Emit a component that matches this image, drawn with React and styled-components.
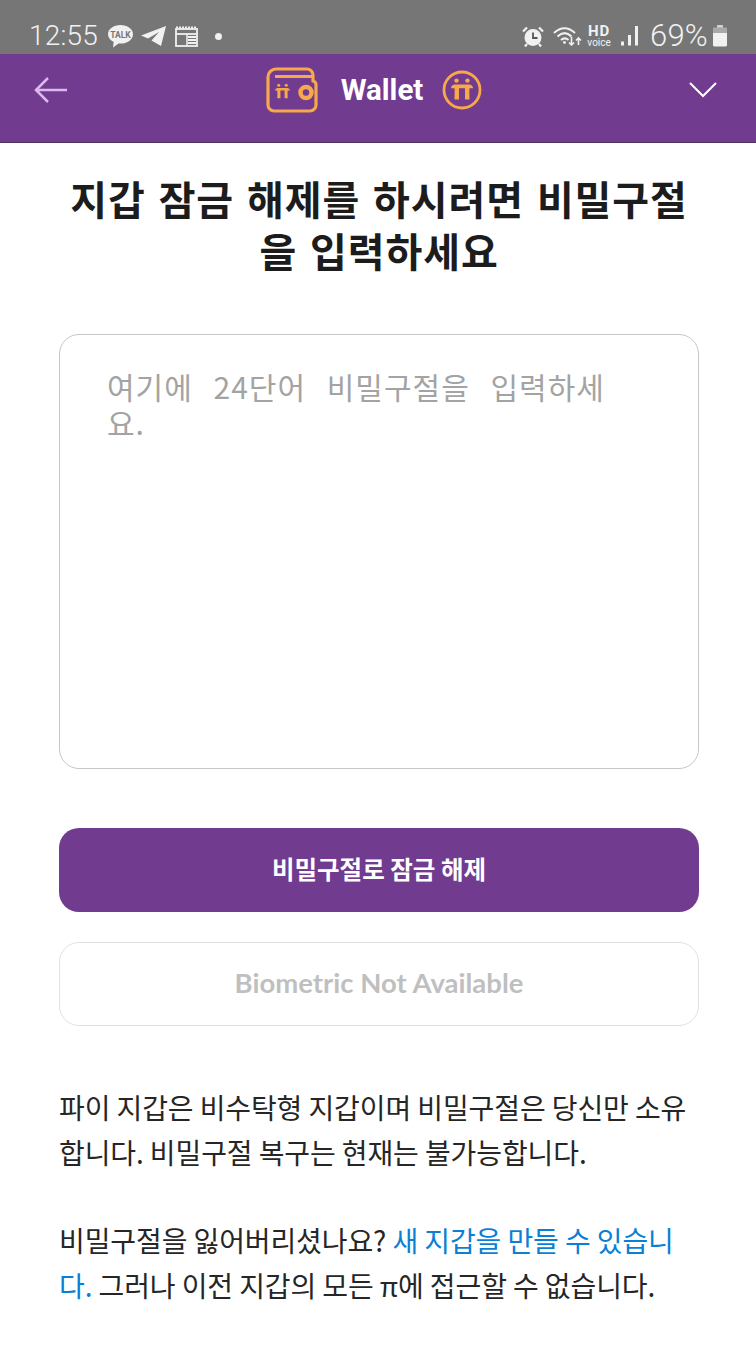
import React from 'react';
import styled, { createGlobalStyle } from 'styled-components';

const purple = '#713b8f';
const orange = '#f6a84a';
const light = '#f1f1f1';
const cjk = '"Noto Sans CJK KR", "Noto Sans", sans-serif';

const GlobalStyle = createGlobalStyle`
  html, body {
    margin: 0;
    padding: 0;
    background: #fff;
  }
  * {
    box-sizing: border-box;
  }
`;

const Page = styled.div`
  width: 756px;
  height: 1358px;
  overflow: hidden;
  background: #fff;
  font-family: ${cjk};
`;

const StatusBar = styled.div`
  height: 54px;
  background: #767676;
  padding: 18px 28px 0 29px;
  display: flex;
  align-items: center;
  justify-content: space-between;
  color: ${light};
`;

const StatusGroup = styled.div`
  display: flex;
  align-items: center;
`;

const StatusItem = styled.div`
  display: flex;
  margin-left: ${({ $left }) => $left || 0}px;
`;

const StatusText = styled.span`
  font-family: Roboto, sans-serif;
  font-size: ${({ $size }) => $size}px;
  font-weight: 300;
  line-height: 32px;
  letter-spacing: 0.2px;
`;

const Header = styled.header`
  height: 89px;
  background: ${purple};
  border-bottom: 1px solid #4c3560;
  padding: 0 39px 16px 34px;
  display: flex;
  align-items: center;
  justify-content: space-between;
`;

const HeaderCenter = styled.div`
  display: flex;
  align-items: center;
  margin-right: 9px;
`;

const HeaderTitle = styled.span`
  margin: 0 19px 0 23px;
  font-family: Roboto, sans-serif;
  font-size: 29.5px;
  font-weight: 700;
  color: #fff;
`;

const Content = styled.main`
  padding: 29px 57px 0 59px;
`;

const Title = styled.h1`
  margin: 0 -4px;
  font-size: 40px;
  font-weight: 700;
  line-height: 52px;
  letter-spacing: 0.9px;
  word-spacing: 3px;
  text-align: center;
  word-break: break-all;
  color: #1c1c1c;
`;

const PhraseBox = styled.div`
  margin-top: 58px;
  height: 435px;
  border: 1px solid #c6c6c6;
  border-radius: 20px;
  padding: 33px 81px 33px 47px;
  font-size: 30px;
  line-height: 36px;
  letter-spacing: 1px;
  word-spacing: 13px;
  word-break: break-all;
  color: #a3a3a3;
`;

const Button = styled.div`
  height: 84px;
  padding-bottom: 3px;
  border-radius: 20px;
  display: flex;
  align-items: center;
  justify-content: center;
  margin-top: ${({ $top }) => $top}px;
  background: ${({ $disabled }) => ($disabled ? '#fff' : purple)};
  border: ${({ $disabled }) => ($disabled ? '1px solid #e2e2e2' : 'none')};
  color: ${({ $disabled }) => ($disabled ? '#bfbfbf' : '#fff')};
  font-family: ${({ $disabled }) => ($disabled ? `Lato, ${cjk}` : cjk)};
  font-size: ${({ $disabled }) => ($disabled ? 27.5 : 24.5)}px;
  font-weight: 700;
`;

const Paragraph = styled.p`
  margin: ${({ $top }) => $top}px 0 0;
  font-size: 28px;
  line-height: 45px;
  letter-spacing: -0.1px;
  color: #262626;
  word-break: break-all;
`;

const Link = styled.span`
  color: #0b7fd6;
`;

const KakaoIcon = () => (
  <svg width="27" height="25" viewBox="0 0 27 25">
    <path d="M13.5 1C6.600 1 1 5 1 10.200c0 3.300 2.300 6.100 5.700 7.800L6 23.500l5.500-4c.7.100 1.300.1 2 .1 6.900 0 12.500-4.200 12.500-9.400S20.400 1 13.500 1z" fill={light} />
    <text x="13.500" y="13.800" textAnchor="middle" fontFamily="Roboto, sans-serif" fontSize="8.500" fontWeight="700" fill="#767676">TALK</text>
  </svg>
);

const TelegramIcon = () => (
  <svg width="25" height="20" viewBox="0 0 25 20">
    <path d="M25 0 0 9.500l7 3L18 6l-7.500 8.500L20 20z" fill={light} />
  </svg>
);

const CalendarIcon = () => (
  <svg width="23" height="21" viewBox="0 0 23 21" fill="none" stroke={light}>
    <path d="M1 1.500h21" strokeWidth="2" strokeDasharray="2 1" />
    <rect x="1" y="3" width="21" height="17" strokeWidth="1.800" />
    <path d="M1 8h21" strokeWidth="1.800" />
    <path d="M12 8v12" strokeWidth="1.500" />
    <path d="M13 11h8M13 14h8M13 17h8" strokeWidth="1.800" />
  </svg>
);

const Dot = styled.span`
  width: 7px;
  height: 7px;
  border-radius: 50%;
  background: ${light};
`;

const AlarmIcon = () => (
  <svg width="22" height="21" viewBox="0 0 22 21">
    <circle cx="11" cy="11.500" r="8.500" fill={light} />
    <path d="M11 6.500V12h4.500" fill="none" stroke="#555" strokeWidth="1.800" />
    <path d="M1 5.500 5 1.500M21 5.500l-4-4M5 18l-2 2.500M17 18l2 2.500" stroke={light} strokeWidth="2.200" />
  </svg>
);

const WifiIcon = () => (
  <svg width="29" height="20" viewBox="0 0 29 20" fill="none" stroke={light} strokeWidth="2">
    <path d="M1 7C7.500 .5 15.500 .5 22 7M4.500 10.500c4.500-4.300 9.500-4.300 14 0M8 14c2.500-2.200 5-2.200 7.500 0" />
    <circle cx="11.500" cy="16.500" r="1.400" fill={light} stroke="none" />
    <path d="M18.500 11v8M16 16.500l2.500 2.500 2.500-2.500M25.500 19v-7M23 14.500l2.500-2.500 2.500 2.500" strokeWidth="1.600" />
  </svg>
);

const HdVoice = styled.div`
  display: flex;
  flex-direction: column;
  align-items: center;
  width: 22px;
  font-family: Roboto, sans-serif;
  color: ${light};
  b {
    font-size: 15px;
    line-height: 13px;
    font-weight: 700;
    letter-spacing: 1px;
  }
  span {
    font-size: 10px;
    line-height: 10px;
  }
`;

const SignalIcon = () => (
  <svg width="19" height="20" viewBox="0 0 19 20" fill={light}>
    <rect x="1" y="15.500" width="3" height="4" />
    <rect x="8" y="9" width="3" height="10.500" />
    <rect x="15" y="0" width="3" height="19.500" />
  </svg>
);

const BatteryIcon = () => (
  <svg width="16" height="22" viewBox="0 0 16 22">
    <rect x="5" y="0" width="6" height="3" fill="#cfcfcf" />
    <path d="M2 2.500h12a1 1 0 0 1 1 1V9H1V3.500a1 1 0 0 1 1-1z" fill="#a9a9a9" />
    <path d="M1 8h14v12a1.500 1.500 0 0 1-1.500 1.500h-11A1.500 1.500 0 0 1 1 20z" fill={light} />
  </svg>
);

const BackIcon = () => (
  <svg width="34" height="28" viewBox="0 0 34 28" fill="none" stroke="#dcb8ee" strokeWidth="2.500">
    <path d="M1.500 14H33M14 2 2 14l12 12" />
  </svg>
);

const ChevronIcon = () => (
  <svg width="28" height="16" viewBox="0 0 28 16" fill="none" stroke="#fff" strokeWidth="2">
    <path d="M1 1l13 13L27 1" />
  </svg>
);

const PiMark = () => (
  <g fill={orange}>
    <path d="M-8.500-2.200Q-8-5-5.500-5H5.500Q8-5 8.500-2.200H5.800Q5.500 0 5.800 6.500H2.300V-2.200H-2.300V6.500H-5.800Q-5.500 0-5.800-2.200z" />
    <circle cx="-4.200" cy="-8" r="1.700" />
    <circle cx="4.200" cy="-8" r="1.700" />
  </g>
);

const WalletIcon = () => (
  <svg width="52" height="46" viewBox="0 0 52 46" fill="none">
    <path d="M47 14V8a6 6 0 0 0-6-6H10a8 8 0 0 0-8 8v28a6 6 0 0 0 6 6h36a6 6 0 0 0 6-6V18a4 4 0 0 0-3-4z" stroke={orange} strokeWidth="3.200" />
    <path d="M9 9.500h38" stroke={orange} strokeWidth="3" />
    <g transform="translate(16.500 25.500) scale(0.9)">
      <PiMark />
    </g>
    <circle cx="40" cy="25.500" r="5.500" stroke={orange} strokeWidth="4.500" />
  </svg>
);

const PiCoinIcon = () => (
  <svg width="40" height="40" viewBox="0 0 40 40" fill="none">
    <circle cx="20" cy="20" r="18" stroke={orange} strokeWidth="2.800" />
    <g transform="translate(20 21) scale(1.300)">
      <PiMark />
    </g>
  </svg>
);

const App = () => (
  <Page>
    <GlobalStyle />
    <StatusBar>
      <StatusGroup>
        <StatusText $size={28}>12:55</StatusText>
        <StatusItem $left={9}><KakaoIcon /></StatusItem>
        <StatusItem $left={7}><TelegramIcon /></StatusItem>
        <StatusItem $left={9}><CalendarIcon /></StatusItem>
        <StatusItem $left={17}><Dot /></StatusItem>
      </StatusGroup>
      <StatusGroup>
        <StatusItem><AlarmIcon /></StatusItem>
        <StatusItem $left={9}><WifiIcon /></StatusItem>
        <StatusItem $left={6}>
          <HdVoice>
            <b>HD</b>
            <span>voice</span>
          </HdVoice>
        </StatusItem>
        <StatusItem $left={10}><SignalIcon /></StatusItem>
        <StatusItem $left={11}><StatusText $size={31}>69%</StatusText></StatusItem>
        <StatusItem $left={4}><BatteryIcon /></StatusItem>
      </StatusGroup>
    </StatusBar>
    <Header>
      <BackIcon />
      <HeaderCenter>
        <WalletIcon />
        <HeaderTitle>Wallet</HeaderTitle>
        <PiCoinIcon />
      </HeaderCenter>
      <ChevronIcon />
    </Header>
    <Content>
      <Title>지갑 잠금 해제를 하시려면 비밀구절을 입력하세요</Title>
      <PhraseBox>여기에 24단어 비밀구절을 입력하세요.</PhraseBox>
      <Button $top={59}>비밀구절로 잠금 해제</Button>
      <Button $top={30} $disabled>Biometric Not Available</Button>
      <Paragraph $top={59}>파이 지갑은 비수탁형 지갑이며 비밀구절은 당신만 소유합니다. 비밀구절 복구는 현재는 불가능합니다.</Paragraph>
      <Paragraph $top={43}>
        비밀구절을 잃어버리셨나요? <Link>새 지갑을 만들 수 있습니다.</Link> 그러나 이전 지갑의 모든 π에 접근할 수 없습니다.
      </Paragraph>
    </Content>
  </Page>
);

export default App;
